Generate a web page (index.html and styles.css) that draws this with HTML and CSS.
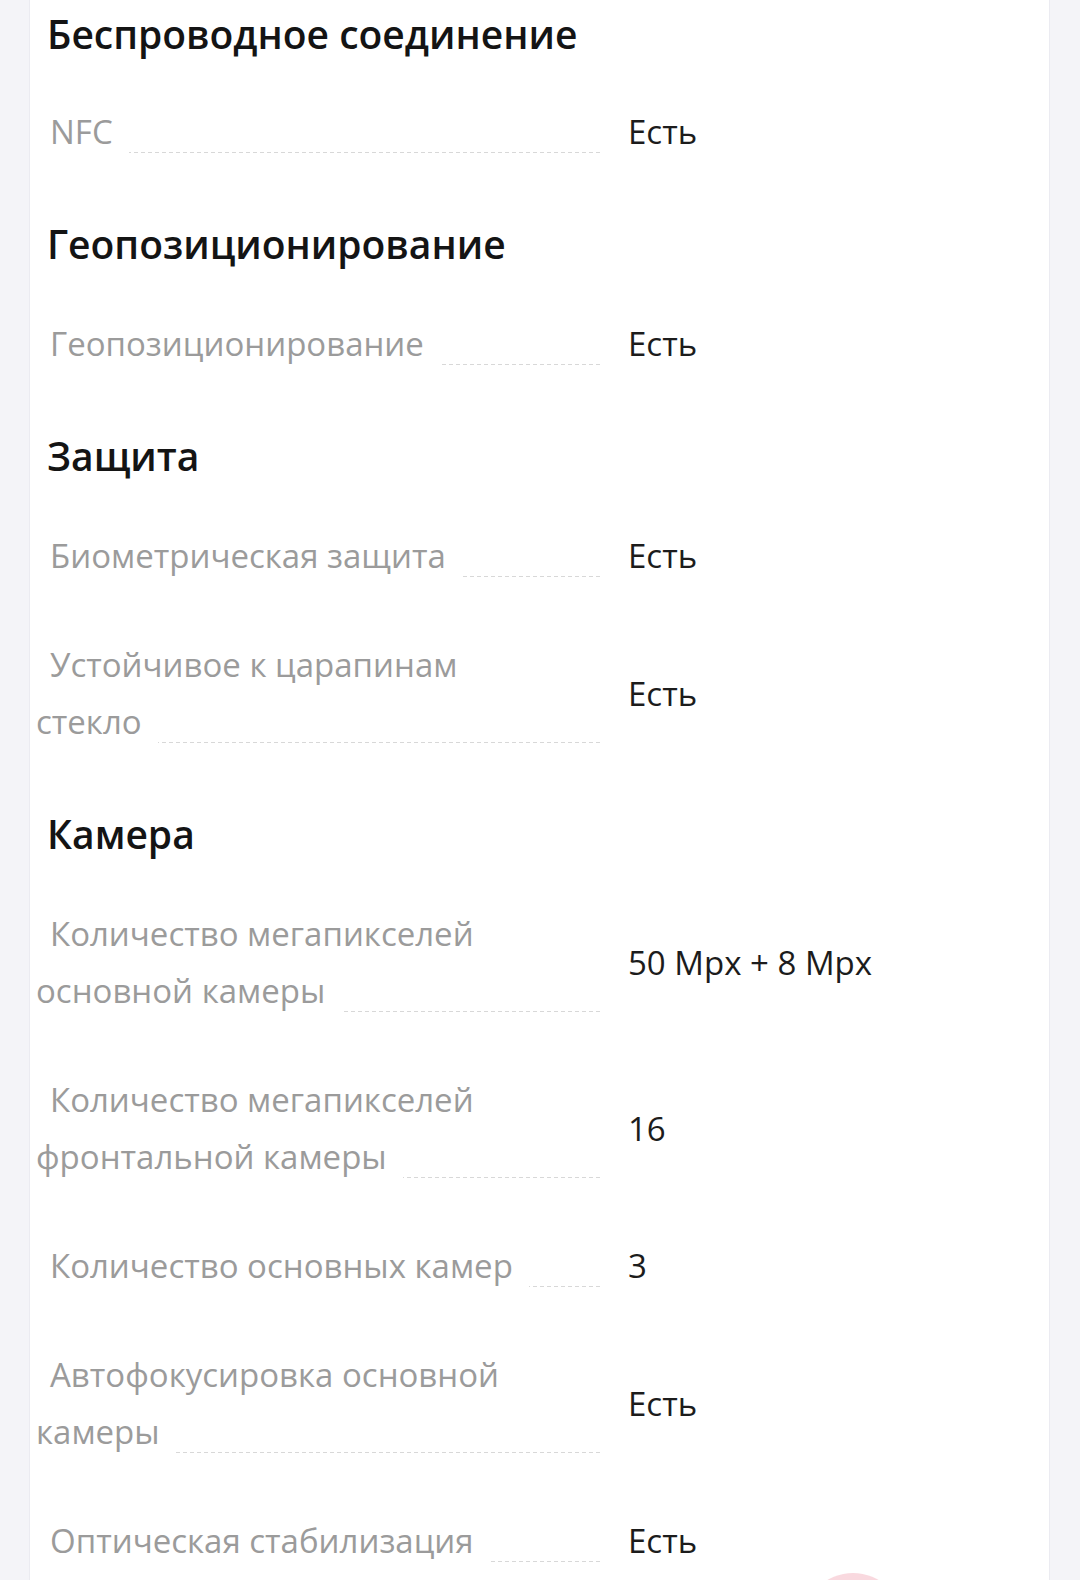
FILE: index.html
```html
<!DOCTYPE html>
<html lang="ru">
<head>
<meta charset="utf-8">
<title>Характеристики</title>
<link rel="stylesheet" href="styles.css">
</head>
<body>
<div class="card">
  <h2 class="group-title">Беспроводное соединение</h2>
  <div class="row"><div class="label"><span>NFC</span></div><div class="value">Есть</div></div>

  <h2 class="group-title">Геопозиционирование</h2>
  <div class="row"><div class="label"><span>Геопозиционирование</span></div><div class="value">Есть</div></div>

  <h2 class="group-title">Защита</h2>
  <div class="row"><div class="label"><span>Биометрическая защита</span></div><div class="value">Есть</div></div>
  <div class="row"><div class="label"><span>Устойчивое к царапинам стекло</span></div><div class="value">Есть</div></div>

  <h2 class="group-title">Камера</h2>
  <div class="row"><div class="label"><span>Количество мегапикселей основной камеры</span></div><div class="value">50 Mpx + 8 Mpx</div></div>
  <div class="row"><div class="label"><span>Количество мегапикселей фронтальной камеры</span></div><div class="value">16</div></div>
  <div class="row"><div class="label"><span>Количество основных камер</span></div><div class="value">3</div></div>
  <div class="row"><div class="label"><span>Автофокусировка основной камеры</span></div><div class="value">Есть</div></div>
  <div class="row"><div class="label"><span>Оптическая стабилизация</span></div><div class="value">Есть</div></div>
</div>
<div class="fab"></div>
</body>
</html>
```

FILE: styles.css
```css
html, body {
  margin: 0;
  padding: 0;
}
body {
  background: #f4f4f8;
  font-family: "Open Sans", "Noto Sans", "DejaVu Sans", sans-serif;
  overflow: hidden;
}
.card {
  display: flow-root;
  margin: -26px 30px 0 29px;
  background: #ffffff;
  border-left: 1px solid #ebebf1;
  border-right: 1px solid #ebebf1;
  padding: 0 0 0 6px;
  min-height: 1700px;
}
.group-title {
  margin: 30px 0 18px 0;
  padding-left: 11px;
  font-size: 39px;
  line-height: 55px;
  font-weight: 600;
  color: #141414;
}
.group-title:first-child {
  margin-top: 32px;
  margin-bottom: 16px;
}
.row {
  display: grid;
  grid-template-columns: 565px 1fr;
  column-gap: 27px;
  align-items: center;
  padding: 26px 0;
}
.label {
  font-size: 33px;
  line-height: 57px;
  color: #9b9b9b;
  padding-right: 36px;
  background-image: repeating-linear-gradient(90deg, #d8d8d8 0 4px, transparent 4px 7px);
  background-size: 100% 1px;
  background-repeat: no-repeat;
  background-position: 0 calc(100% - 7px);
}
.label span {
  background: #ffffff;
  padding: 0 16px 10px 14px;
}
.value {
  font-size: 33px;
  line-height: 57px;
  color: #1c1c1c;
}
.fab {
  position: absolute;
  left: 803px;
  top: 1573px;
  width: 100px;
  height: 100px;
  border-radius: 50%;
  background: radial-gradient(circle at 50% 50%, #f0a9b6 0 38%, #f9d9df 40% 100%);
}
```
